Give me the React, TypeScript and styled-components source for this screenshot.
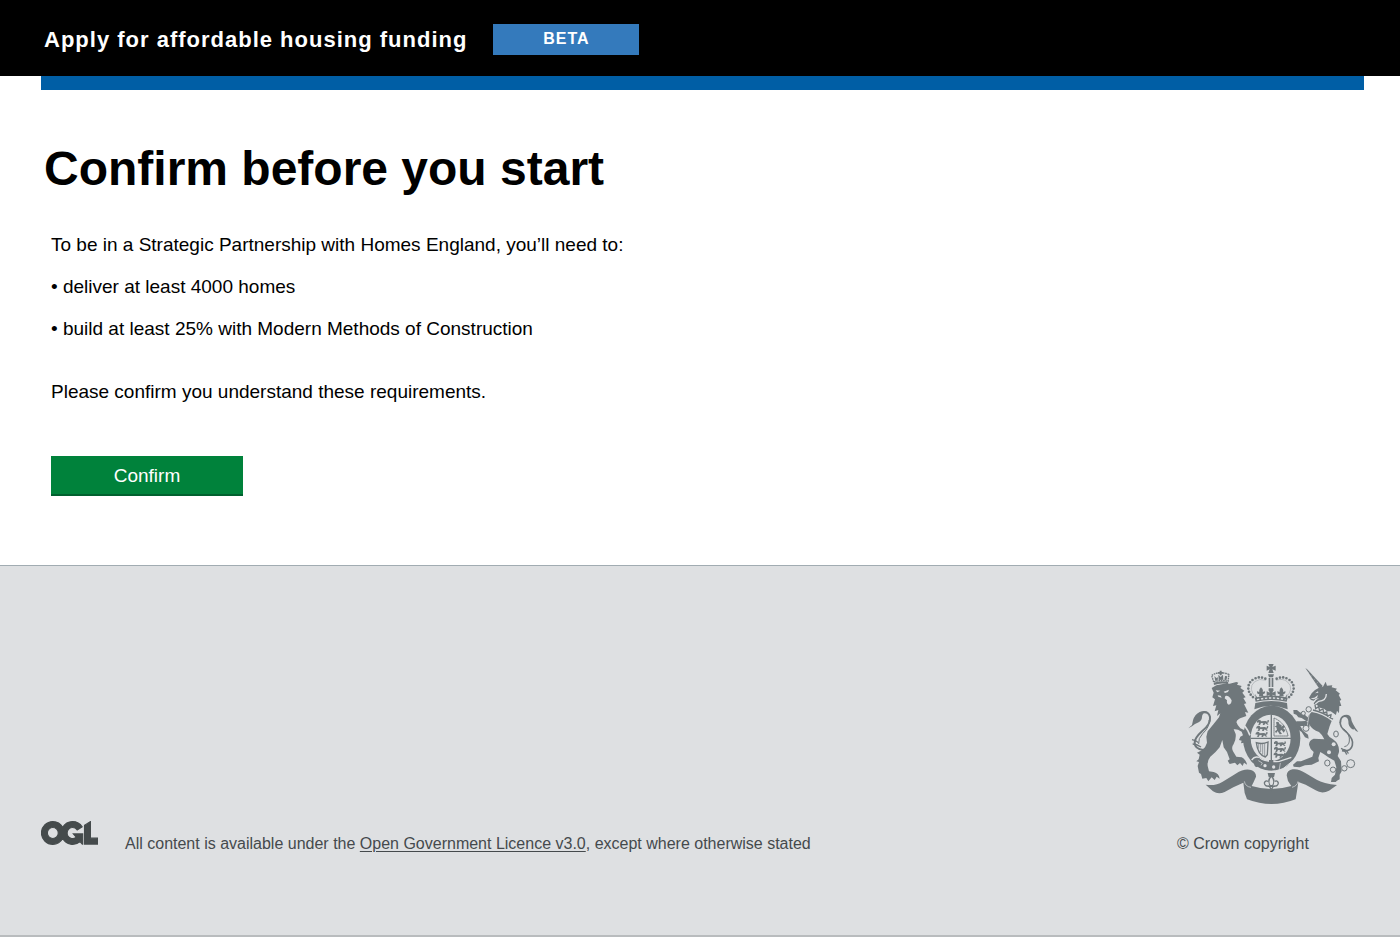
import React from "react";
import styled, { createGlobalStyle } from "styled-components";

const GlobalStyle = createGlobalStyle`
  * { box-sizing: border-box; }
  body {
    margin: 0;
    background: #fff;
    color: #000;
    font-family: "Liberation Sans", Helvetica, Arial, sans-serif;
  }
`;

const Header = styled.header`
  display: flex;
  align-items: flex-start;
  gap: 26px;
  height: 76px;
  padding: 24px 44px 0;
  background: #000;
  color: #fff;
`;

const ServiceName = styled.span`
  font-size: 22px;
  line-height: 32px;
  font-weight: 700;
  letter-spacing: 1px;
`;

const PhaseTag = styled.strong`
  width: 146px;
  height: 31px;
  font-size: 16px;
  line-height: 30px;
  letter-spacing: 1px;
  text-align: center;
  background: #347abc;
`;

const Container = styled.div`
  padding: 0 36px 0 41px;
`;

const Bar = styled.div`
  height: 14px;
  background: #005ea5;
`;

const Main = styled.main`
  padding: 51px 0 69px 3px;
`;

const Heading = styled.h1`
  margin: 0 0 37px;
  font-size: 48px;
  line-height: 56px;
  font-weight: 700;
`;

const Content = styled.div`
  padding-left: 7px;
  font-size: 19px;
  line-height: 21px;
`;

const Paragraph = styled.p`
  margin: 0;
`;

const Requirements = styled.ul`
  display: flex;
  flex-direction: column;
  gap: 21px;
  margin: 21px 0 42px;
  padding: 0;
  list-style: none;
`;

const ConfirmButton = styled.button`
  display: block;
  width: 192px;
  height: 40px;
  margin-top: 54px;
  padding: 0;
  border: 0;
  border-bottom: 2px solid #00602e;
  background: #00823b;
  color: #fff;
  font: inherit;
  cursor: pointer;
`;

const Footer = styled.footer`
  display: flex;
  align-items: flex-end;
  padding: 94px 36px 81px 41px;
  border-top: 1px solid #a1acb2;
  border-bottom: 2px solid #b9bcbe;
  background: #dee0e2;
  color: #454a4d;
  font-size: 16px;
  line-height: 20px;
`;

const OglLogo = styled.svg`
  width: 57px;
  height: 24px;
  margin: 0 27px 9px 0;
  fill: #454b4c;
  stroke: #454b4c;
  stroke-width: 10px;
`;

const Licence = styled.p`
  flex: 1;
  margin: 0;
`;

const FooterLink = styled.a`
  color: inherit;
  text-decoration-thickness: 1px;
  text-underline-offset: 2px;
`;

const Copyright = styled.div`
  display: flex;
  flex-direction: column;
  gap: 26px;
  width: 187px;
`;

const CrestArt = styled.svg`
  width: 180px;
  height: 148px;
  margin-left: 6px;
  fill: #6f777b;
  stroke: none;
`;

const INK = "#6f777b";
const PAPER = "#dee0e2";

/* One small walking lion of the English quarters. */
const Passant = ({ x, y }: { x: number; y: number }) => (
  <path
    transform={`translate(${x} ${y})`}
    d="M0 4l5-4 5 1 2 4 13-1 6 2 1-5 4 1-1 6-5 2 5 4-4 1-6-4-3 5-5 0 2-5-7-1-3 6-6-1 3-3-1-4-5 1z"
  />
);

const Lion = () => (
  <g>
    <path d="M92 66l-6-20q14-8 27-8t25 6l-3 20q-22-6-43 2z" fill="none" stroke={INK} strokeWidth="4" strokeDasharray="5 2" />
    <path d="M92 68q21-8 43-2l1 7q-22-6-43 2zM94 48l6 6 5-2-1 9-7 2zM106 44l7 7 7-7 1 15-14 1zM126 48l7 1-3 12-6-2z" />
    <path d="M110 32h6v4h5v5h-5v5h-6v-5h-5v-5h5z" />
    <path d="M86 84L100 76L120 72L140 71L160 66L166 68L162 74L176 78L172 84L184 92L178 98L188 112L181 114L190 130L183 132L196 158L186 156L190 168L180 172Q165 176 160 186Q163 196 172 205L188 212L202 238L201 250L193 244L190 256L182 248L174 250L176 242L168 240L172 230L180 226L176 215Q162 206 152 208L158 222Q160 238 152 252Q144 262 150 274L160 290L176 292Q190 300 192 314L183 308L179 318L171 309L163 316L156 308L140 312L134 302L140 298L132 276L122 262L118 240L110 262Q98 278 82 290Q72 302 74 318L78 334L92 336Q108 340 110 356L101 350L95 360L86 352L76 364L70 354L58 356L54 342L48 338L44 318L48 306L40 304L47 298L50 284L42 278L54 272L66 262L72 248L70 230L74 214L90 194L108 172L112 160L102 168L106 150L95 154L100 136L90 138L96 118L88 112L92 98Z" />
    <path d="M98 91l14 1-9 5zM122 95l16-6-3 7-9 3zM104 106l9 1 3 6-10-3z" fill={PAPER} />
    <path d="M127 108q8-2 14 5l5 8q-1 13-9 13-7-3-5-13l-7-6z" fill={PAPER} />
    <path d="M163 182q25 10 38 44" fill="none" stroke={PAPER} strokeWidth="5" />
    <path d="M16 205l11-10 3-14q5-18 20-25 14-6 24 0-17 2-17 15 0 10-10 16-12 5-20 12z" />
    <path d="M61 157q17-2 20 14 3 21-24 43-22 20-22 34 0 18 26 22" fill="none" stroke={INK} strokeWidth="6" />
    <path d="M78 180q3 20-19 41-14 14-12 31" fill="none" stroke={INK} strokeWidth="3" />
    <path d="M27 239q13 2 19 9M29 252q12 0 25 9" fill="none" stroke={INK} strokeWidth="4" />
  </g>
);

const Unicorn = () => (
  <g>
    <path d="M367 24l7 5 45 49-6 8-6-3z" />
    <path d="M378 36l-2 4M387 46l-3 4M396 56l-4 5M405 66l-5 5" fill="none" stroke={PAPER} strokeWidth="1" />
    <path d="M378 113L386 100L396 90L408 83L420 80L428 65L432 77L448 76L446 82L462 86L458 91L471 101L467 105L475 120L470 122L475 138L469 138L468 160L462 152L458 168Q440 166 430 158L396 138L392 130Q396 120 408 115L398 116L392 122L384 120Z" />
    <path d="M396 100l9-6 1 4zM382 115l12-2 11-8-3 9-10 4z" fill={PAPER} />
    <path d="M430 102q0 20-23 22l-10 8" fill="none" stroke={PAPER} strokeWidth="4" />
    <path d="M390 131l12 4 9 8 12 3 9 8 11 0 17 12-8 18-68-30z" fill={PAPER} />
    <path d="M390 150q32 7 60 28M396 134l2 12 9-6 3 12 10-5 2 12 9-3 2 12 11-4-2 12" fill="none" stroke={INK} strokeWidth="4" />
    <path d="M386 156Q420 162 446 183L440 198L433 222Q438 232 450 238Q470 252 468 276L464 288L474 304L476 334L470 344L470 358L462 362L458 366L444 366L446 354L456 344L460 322L454 302L436 292L422 282L412 276L406 294L408 304L386 314L366 316L350 322L332 320L330 314L342 304L354 304L388 290L392 276Q380 266 378 254Q378 240 392 236L424 238Q420 226 408 216Q388 210 378 192L372 176Q376 164 386 156Z" />
    <path d="M331 150l11 0 8 7 13 5 13 12-2 12-18-12-10-2-6-8-8-3zM378 182l-24 2-14 0-4 12 8 12 12 8 10 16 11 4-2-12-15-12-8-14 14 0 14 2z" />
    <path d="M469 189q0-19 15-24 15-4 20 8 1 15 22 43-9-3-13-10l-2 3q-16-7-15-26-2-12-11-12-10 1-10 16z" />
    <path d="M472 186q-3 14 18 30 23 22 18 40-5 20-31 16" fill="none" stroke={INK} strokeWidth="5" />
    <path d="M482 206q20 19 17 37-1 14-15 17" fill="none" stroke={INK} strokeWidth="3" />
    <path d="M478 268q14 0 18 13M474 265q13 5 17 19" fill="none" stroke={INK} strokeWidth="4" />
    <g fill={PAPER} stroke={INK} strokeWidth="3">
      <circle cx="377" cy="148" r="8" />
      <circle cx="361" cy="160" r="6" />
      <circle cx="369" cy="205" r="9" />
      <ellipse cx="459" cy="222" rx="7" ry="9" />
      <ellipse cx="433" cy="309" rx="8" ry="9" />
      <circle cx="450" cy="329" r="8" />
      <circle cx="484" cy="325" r="8" />
      <circle cx="503" cy="311" r="12" />
    </g>
    <circle cx="452" cy="253" r="6" fill={PAPER} />
    <circle cx="438" cy="277" r="6" fill={PAPER} />
    <path d="M379 160l-6 36" fill="none" stroke={PAPER} strokeWidth="2" />
  </g>
);

const Crown = () => (
  <g>
    <path d="M256 12h16l-4 9 10-4v15l-10-4 4 11h-16l4-11-9 4V17l9 4z" />
    <path d="M255 43h18l-3 9h-12zM257 54h5v27h-5zM266 54h5v27h-5zM257 85h14v7h-14z" />
    <g fill="none" stroke={INK} strokeWidth="8" strokeLinecap="round">
      <path d="M247 56q-18-8-34 1-18 10-17 29 1 15 17 28" strokeDasharray="0 10" />
      <path d="M281 56q18-8 34 1 18 10 17 29-1 15-17 28" strokeDasharray="0 10" />
    </g>
    <path d="M249 61q-20-7-34 4-12 11-10 23 2 12 12 21M279 61q20-7 34 4 12 11 10 23-2 12-12 21" fill="none" stroke={INK} strokeWidth="1" />
    <path d="M234 82q8 8 5 14l7-2q2 7-6 9l1 6h-13l1-6q-8-1-7-9l7 2q-2-7 5-14zM295 82q8 8 5 14l7-2q2 7-6 9l1 6h-13l1-6q-8-1-7-9l7 2q-2-7 5-14z" />
    <path d="M257 89h15l-4 9 10-4v14l-10-4 2 9h-12l2-9-9 4V94l9 4zM216 101l7 12-4 2zM313 101l-7 12 4 2z" />
    <path d="M215 113q49-13 99 0l-3 12q-47-10-93 0z" />
    <path d="M222 119q42-10 85 0" fill="none" stroke={PAPER} strokeWidth="4" strokeDasharray="7 5" />
    <path d="M217 129q48-12 95 0l2 19q-51-21-100 0z" />
  </g>
);

const Shield = () => (
  <g>
    <ellipse cx="266" cy="235" rx="91" ry="103" fill={PAPER} />
    <ellipse cx="266" cy="235" rx="86" ry="98" />
    <ellipse cx="263" cy="234" rx="60" ry="70" fill={PAPER} />
    <path d="M263 163h4v138h-4zM203 233h121v4H203z" />
    <Passant x={222} y={179} />
    <Passant x={220} y={197} />
    <Passant x={218} y={215} />
    <Passant x={273} y={243} />
    <Passant x={273} y={260} />
    <Passant x={272} y={277} />
    <path d="M273 174q34 14 42 54h-42z" fill="none" stroke={INK} strokeWidth="3" strokeDasharray="5 1" />
    <path d="M279 187l7-2 4 8 6 2-1 5 7-5 4 5-5 5 6 6-5 7-6-8-5 3 6 9-7 1-6-10-5 7-3-6 6-5-2-7-5-2 6-4z" />
    <path d="M220 248q18 6 35-2l-2 38-6 7q-23-7-27-43z" fill="none" stroke={INK} strokeWidth="4" />
    <path d="M227 251v15M233 252v24M239 252v32M245 250v38" fill="none" stroke={INK} strokeWidth="2" />
    <path d="M206 300q10-14 24-6 20 14 59 10l36-12" fill="none" stroke={PAPER} strokeWidth="4" />
    <path d="M218 296q11-7 17 5l12 6q32 8 58 1l27-13-33 29q-27 11-54 1l-15-7-11 4-6-8 5-5-4-8z" />
    <path d="M216 322q40 22 84 4l30-24" fill="none" stroke={PAPER} strokeWidth="3" />
    <path d="M226 302l12 7-4 7M292 309l-3 18" fill="none" stroke={PAPER} strokeWidth="2" />
    <circle cx="246" cy="317" r="5" fill={PAPER} />
    <circle cx="272" cy="321" r="5" fill={PAPER} />
    <path d="M258 300h13v9h-13z" />
  </g>
);

const Ribbon = () => (
  <g>
    <path d="M68 374Q97 379 119 365L158 341Q185 324 204 330Q220 336 219 350L212 366L206 378Q264 396 325 378L315 363L311 346Q312 331 329 328Q346 325 367 339L401 359Q421 371 462 375L438 392Q417 403 398 391L368 374L346 366L343 387L338 418Q266 446 192 418L185 399L181 368L151 382L125 396Q106 404 90 394Z" />
    <path d="M184 364q3 16 20 18M345 364q-2 14-18 18" fill="none" stroke={PAPER} strokeWidth="2" />
    <path d="M254 339h22l-3 13h-16z" />
    <g fill={PAPER} stroke={INK} strokeWidth="4">
      <path d="M265 348q13 14 4 29h-8q-9-15 4-29z" />
      <path d="M259 378q-14 2-15-9 3-9 11-5M271 378q14 2 15-9-3-9-11-5" />
      <path d="M254 379h22M260 380l5 10 5-10" />
    </g>
  </g>
);

const RoyalCrest = () => (
  <CrestArt viewBox="0 0 540 444" role="img" aria-label="Royal coat of arms">
    <Shield />
    <Crown />
    <Lion />
    <Unicorn />
    <Ribbon />
  </CrestArt>
);

const requirements = [
  "deliver at least 4000 homes",
  "build at least 25% with Modern Methods of Construction",
];

export default function App() {
  return (
    <>
      <GlobalStyle />
      <Header>
        <ServiceName>Apply for affordable housing funding</ServiceName>
        <PhaseTag>BETA</PhaseTag>
      </Header>
      <Container>
        <Bar />
        <Main>
          <Heading>Confirm before you start</Heading>
          <Content>
            <Paragraph>
              To be in a Strategic Partnership with Homes England, you’ll need to:
            </Paragraph>
            <Requirements>
              {requirements.map((item) => (
                <li key={item}>• {item}</li>
              ))}
            </Requirements>
            <Paragraph>Please confirm you understand these requirements.</Paragraph>
            <ConfirmButton type="button">Confirm</ConfirmButton>
          </Content>
        </Main>
      </Container>
      <Footer>
        <OglLogo viewBox="-4 -4 491 204" role="img" aria-label="Open Government Licence">
          <path d="M421.5 142.8V.1l-50.7 32.3v161.1h112.4v-50.7zm-122.3-9.6A47.12 47.12 0 0 1 221 97.8c0-26 21.1-47.1 47.1-47.1 16.7 0 31.4 8.7 39.7 21.8l42.7-27.2A97.63 97.63 0 0 0 268.1 0c-36.5 0-68.3 20.1-85.1 49.7A98 98 0 0 0 97.8 0C43.9 0 0 43.9 0 97.8s43.9 97.8 97.8 97.8c36.5 0 68.3-20.1 85.1-49.7a97.76 97.76 0 0 0 149.6 25.4l19.4 22.2h3v-87.8h-80l24.3 27.5zM97.8 145c-26 0-47.1-21.1-47.1-47.1s21.1-47.1 47.1-47.1 47.1 21.1 47.1 47.1S123.8 145 97.8 145" />
        </OglLogo>
        <Licence>
          All content is available under the{" "}
          <FooterLink href="#licence">Open Government Licence v3.0</FooterLink>, except
          where otherwise stated
        </Licence>
        <Copyright>
          <RoyalCrest />
          <span>© Crown copyright</span>
        </Copyright>
      </Footer>
    </>
  );
}
